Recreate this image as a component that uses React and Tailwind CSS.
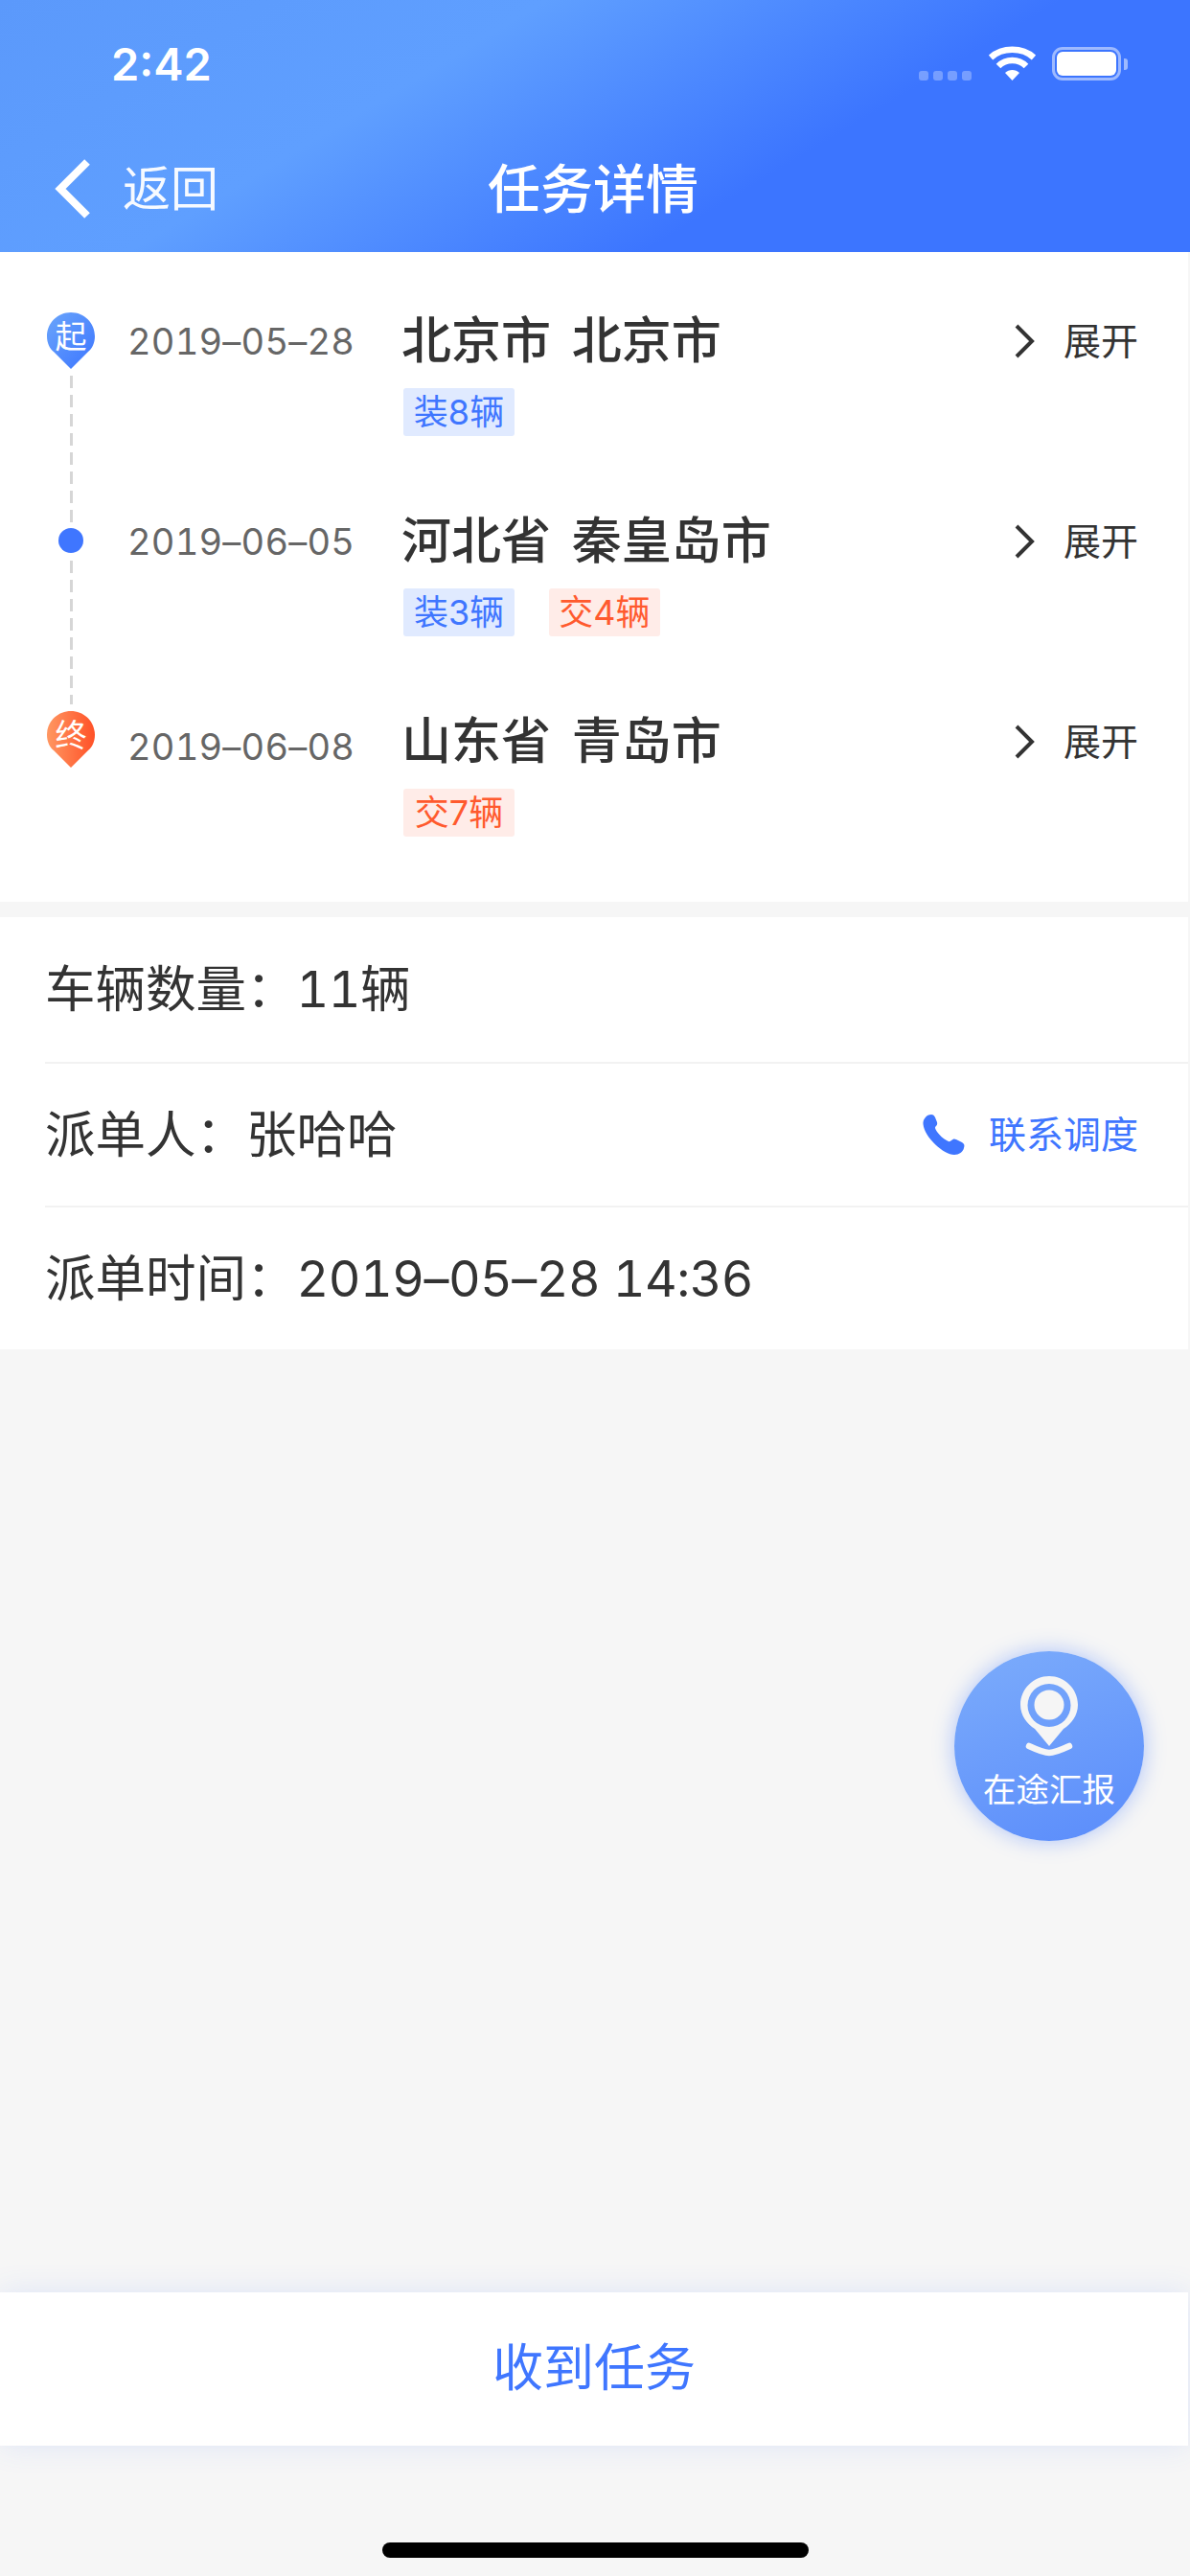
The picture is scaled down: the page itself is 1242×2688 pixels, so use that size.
const FONT = "font-['Inter','Noto_Sans_CJK_SC',sans-serif]"

const STOPS = [
  {
    date: '2019-05-28',
    dateClass: '',
    title: '北京市 北京市',
    tags: [{ label: '装8辆', kind: 'load' }],
  },
  {
    date: '2019-06-05',
    dateClass: '',
    title: '河北省 秦皇岛市',
    tags: [
      { label: '装3辆', kind: 'load' },
      { label: '交4辆', kind: 'unload' },
    ],
  },
  {
    date: '2019-06-08',
    dateClass: 'mt-[5px]',
    title: '山东省 青岛市',
    tags: [{ label: '交7辆', kind: 'unload' }],
  },
]

function StatusBar() {
  return (
    <div className="flex h-[84px] items-end justify-between pl-[116px] pr-[65px]">
      <span className="text-[47px] font-semibold leading-[34px] text-white">2:42</span>
      <div className="flex items-end">
        <div className="flex gap-[5px]">
          {[0, 1, 2, 3].map((i) => (
            <span key={i} className="h-[10px] w-[10px] rounded-[3px] bg-white/30" />
          ))}
        </div>
        <svg className="ml-[18px]" width="49" height="36" viewBox="0 0 49 36" fill="none">
          <path d="M2 12C14 1 35 1 47 12" stroke="#fff" strokeWidth="6.5" />
          <path d="M10 21C18 13 31 13 39 21" stroke="#fff" strokeWidth="6.5" />
          <path d="M17 28C21 24 28 24 32 28L24.5 36Z" fill="#fff" />
        </svg>
        <div className="ml-[17px] flex items-center">
          <div className="h-[35px] w-[72px] rounded-[11px] border-[3px] border-white/50 p-[2px]">
            <div className="h-full w-full rounded-[6px] bg-white" />
          </div>
          <div className="ml-[3px] h-[12px] w-[4px] rounded-r-[3px] bg-white/50" />
        </div>
      </div>
    </div>
  )
}

function Header() {
  return (
    <header className="h-[263px] bg-[linear-gradient(149deg,#5b99fb_0%,#5f9fff_34%,#3c75ff_66%)]">
      <StatusBar />
      <div className="relative mt-[82px] flex items-center pl-[57px]">
        <svg width="38" height="62" viewBox="0 0 38 62" fill="none">
          <path d="M34 3L6 31L34 59" stroke="#fff" strokeWidth="8" />
        </svg>
        <span className="ml-[33px] text-[50px] leading-[60px] text-white/95">返回</span>
        <h1 className="absolute left-0 w-[1238px] text-center text-[55px] font-medium leading-[60px] text-white">
          任务详情
        </h1>
      </div>
    </header>
  )
}

function Pin({ label, gradient }) {
  return (
    <div className="relative h-[59px] w-[50px]">
      <svg className="absolute inset-0" width="50" height="59" viewBox="0 0 50 59">
        <defs>
          <linearGradient id="pin-start" x1="0" y1="0" x2="1" y2="1">
            <stop offset="0" stopColor="#6aa5fb" />
            <stop offset="1" stopColor="#3c75ff" />
          </linearGradient>
          <linearGradient id="pin-end" x1="0" y1="0" x2="1" y2="0">
            <stop offset="0" stopColor="#ff9762" />
            <stop offset="1" stopColor="#ff5127" />
          </linearGradient>
        </defs>
        <path
          d="M25 0C39 0 50 11 50 25C50 32 47 38 43 41L25 59L7 41C3 38 0 32 0 25C0 11 11 0 25 0Z"
          fill={`url(#${gradient})`}
        />
      </svg>
      <span className="absolute inset-x-0 top-[5px] text-center text-[33px] leading-[40px] text-white">
        {label}
      </span>
    </div>
  )
}

function Dashes({ height }) {
  return (
    <div
      className="w-[3px] bg-[repeating-linear-gradient(to_bottom,#d6d6d6_0,#d6d6d6_13px,transparent_13px,transparent_20px)]"
      style={{ height }}
    />
  )
}

function Tag({ label, kind }) {
  const tone = kind === 'load' ? 'bg-[#e0eaff] text-[#3f76ff]' : 'bg-[#ffece8] text-[#ff5a2e]'
  return (
    <span className={`flex h-[50px] w-[116px] items-center justify-center rounded-[3px] text-[36px] ${tone}`}>
      {label}
    </span>
  )
}

function Timeline() {
  return (
    <section className="mr-[2px] flex h-[678px] bg-white pl-[49px] pr-[52px] pt-[63px]">
      <div className="flex w-[50px] shrink-0 flex-col items-center">
        <Pin label="起" gradient="pin-start" />
        <div className="mt-[7px]"><Dashes height={153} /></div>
        <div className="my-[6px] h-[26px] w-[26px] rounded-full bg-[#3f76ff]" />
        <div className="mt-[2px]"><Dashes height={150} /></div>
        <div className="mt-[7px]"><Pin label="终" gradient="pin-end" /></div>
      </div>
      <div className="ml-[34px] mt-[5px] flex-1">
        {STOPS.map((stop) => (
          <div key={stop.date} className="flex h-[209px] items-start">
            <span className={`h-[50px] w-[286px] text-[38px] leading-[50px] tracking-[0.200px] text-[#666] tabular-nums ${stop.dateClass}`}>
              {stop.date.replaceAll('-', '–')}
            </span>
            <div className="flex-1">
              <div className="text-[52px] font-medium leading-[50px] text-[#333] [word-spacing:8px]">
                {stop.title}
              </div>
              <div className="ml-[2px] mt-[24px] flex gap-[36px]">
                {stop.tags.map((tag) => <Tag key={tag.label} {...tag} />)}
              </div>
            </div>
            <div className="flex h-[50px] items-center">
              <svg width="22" height="36" viewBox="0 0 22 36" fill="none">
                <path d="M3 2L19 18L3 34" stroke="#333" strokeWidth="4" />
              </svg>
              <span className="ml-[30px] text-[39px] leading-[50px] text-[#333]">展开</span>
            </div>
          </div>
        ))}
      </div>
    </section>
  )
}

function InfoRow({ children, rowClass }) {
  return (
    <div className="pl-[47px]">
      <div className={`flex items-center justify-between pr-[52px] text-[52.500px] text-[#333] ${rowClass}`}>
        {children}
      </div>
    </div>
  )
}

function Value({ children }) {
  return <span className="text-[52px] tracking-[-0.500px] tabular-nums">{children}</span>
}

function Info() {
  return (
    <section className="mr-[2px] mt-[16px] bg-white">
      <InfoRow rowClass="h-[153px] border-b-2 border-[#f2f2f2]">
        <span>车辆数量：<Value>11</Value>辆</span>
      </InfoRow>
      <InfoRow rowClass="h-[150px] border-b-2 border-[#f2f2f2]">
        <span>派单人：张哈哈</span>
        <span className="flex items-center text-[39px] text-[#3f76ff]">
          <svg width="44" height="44" viewBox="0 0 44 44" fill="#3f76ff">
            <path d="M9 1C11 1 12 2 13 4L15 9C15.5 11 15 12 13.5 13.5C12.5 14.5 13 16 15 19C18 23 21 26 25 28C27 29.5 28.5 29.5 30 28C31.5 26.5 33 26 35 27L41 30C43.500 31.500 44 33 43 36C42 40 38 43 33 43C22 43 2 25 .5 11C0 6 4 1 9 1Z" />
          </svg>
          <span className="ml-[25px]">联系调度</span>
        </span>
      </InfoRow>
      <InfoRow rowClass="h-[148px]">
        <span>派单时间：<Value>2019–05–28 14:36</Value></span>
      </InfoRow>
    </section>
  )
}

function ReportButton() {
  return (
    <button className="absolute left-[996px] top-[1723px] flex h-[198px] w-[198px] flex-col items-center rounded-full bg-[linear-gradient(160deg,#7cacfb,#5a8cfb)] pt-[26px] shadow-[0_0_22px_rgba(63,118,255,0.4)]">
      <svg width="60" height="86" viewBox="0 0 60 86" fill="none">
        <path
          fillRule="evenodd"
          d="M30 0C46 0 60 13 60 30C60 41 53 50 45 55L30 73L15 55C7 50 0 41 0 30C0 13 14 0 30 0ZM30 8A22.500 22.500 0 1 0 30 53A22.500 22.500 0 1 0 30 8Z"
          fill="#f5f5f5"
        />
        <circle cx="30" cy="30" r="15.500" fill="#f5f5f5" />
        <path d="M9 73C22 79 26 80 30 80C34 80 38 79 51 73" stroke="#f5f5f5" strokeWidth="6.500" strokeLinecap="round" />
      </svg>
      <span className="mt-[11px] text-[34.500px] leading-[44px] text-white">在途汇报</span>
    </button>
  )
}

export default function App() {
  return (
    <div className={`relative flex h-[2688px] w-[1242px] flex-col overflow-hidden bg-[#f6f6f6] ${FONT}`}>
      <Header />
      <Timeline />
      <Info />
      <ReportButton />
      <div className="mt-auto">
        <button className="block h-[160px] w-[1240px] bg-white text-center text-[53px] text-[#3f76ff] shadow-[0_0_30px_rgba(63,118,255,0.13)]">
          收到任务
        </button>
        <div className="mx-auto mb-[19px] mt-[101px] h-[16px] w-[445px] rounded-full bg-black" />
      </div>
    </div>
  )
}
